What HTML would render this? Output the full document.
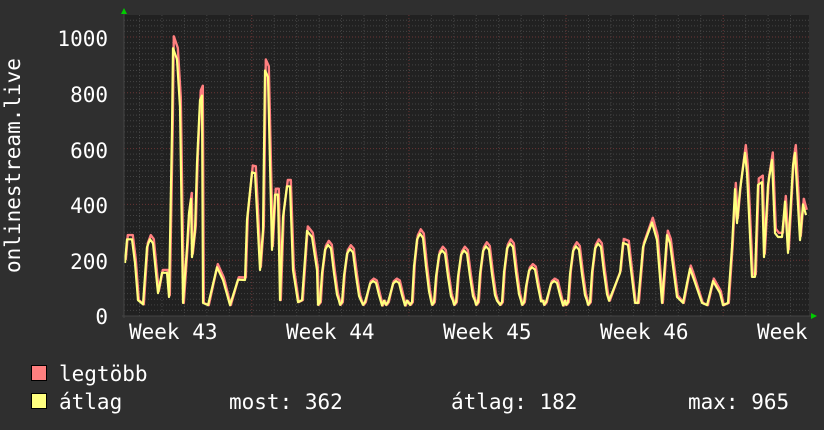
<!DOCTYPE html>
<html><head><meta charset="utf-8"><style>
html,body{margin:0;padding:0;background:#2f2f2f;width:824px;height:430px;overflow:hidden}
svg{display:block}
text{font-family:"DejaVu Sans Mono","Liberation Mono",monospace;fill:#fff;font-size:21px}
</style></head><body>
<svg id="g" width="824" height="430" xmlns="http://www.w3.org/2000/svg">
<rect x="0" y="0" width="824" height="430" fill="#2f2f2f"/>
<rect x="124" y="15" width="685" height="301" fill="#212121"/>
<g id="grid"></g>
<g id="lines"></g>
<line x1="122" y1="316" x2="812" y2="316" stroke="#444" stroke-width="1"/>
<line x1="124" y1="12" x2="124" y2="318" stroke="#444" stroke-width="1"/>
<polygon points="121,14 127,14 124,8" fill="#00cc00"/>
<polygon points="811,313 811,319 817,316" fill="#00cc00"/>
<text x="108" y="46" text-anchor="end">1000</text>
<text x="108" y="102" text-anchor="end">800</text>
<text x="108" y="158" text-anchor="end">600</text>
<text x="108" y="213" text-anchor="end">400</text>
<text x="108" y="269" text-anchor="end">200</text>
<text x="108" y="324" text-anchor="end">0</text>
<text x="129" y="339">Week 43</text>
<text x="286" y="339">Week 44</text>
<text x="443" y="339">Week 45</text>
<text x="600" y="339">Week 46</text>
<text x="757" y="339">Week</text>
<text transform="translate(20,273) rotate(-90)" x="0" y="0" font-size="21">onlinestream.live</text>
<rect x="31.5" y="365.5" width="15" height="15" fill="#ff7f7f" stroke="#000"/>
<rect x="31.5" y="393.5" width="15" height="15" fill="#ffff7f" stroke="#000"/>
<text x="59" y="381">legtöbb</text>
<text x="59" y="409">átlag</text>
<text x="229" y="409">most: 362</text>
<text x="451" y="409">átlag: 182</text>
<text x="688" y="409">max: 965</text>
</svg>
<script>
function Y(v){return 316-v*0.279;}
var grid=document.getElementById('grid'),h='';
for(var v=20;v<=1080;v+=20){var y=Y(v);if(y<15)break;
 h+='<line x1="124" x2="809" y1="'+y+'" y2="'+y+'" stroke="'+(v%200==0?'#6a3535':'#444')+'" stroke-width="1" stroke-dasharray="1,2"/>';}
for(var x=139.5;x<809;x+=22.45){var maj=[252,409,566,723].some(function(m){return Math.abs(m-x)<4});
 h+='<line y1="15" y2="316" x1="'+x+'" x2="'+x+'" stroke="'+(maj?'#6a3535':'#444')+'" stroke-width="1" stroke-dasharray="1,2"/>';}
grid.innerHTML=h;
var kp=[[125,190],[127,275],[132,275],[135,190],[138,57],[143,42],[147,247],[150,275],[153,261],[158,82],[162,155],[167,155],[169,68],[172,667],[173,960],[177,920],[180,749],[183,47],[187,247],[189,369],[191,420],[192,211],[195,308],[197,548],[200,774],[202,790],[203,47],[208,39],[217,175],[223,129],[230,39],[238,130],[245,129],[247,344],[252,515],[255,512],[260,165],[263,308],[265,880],[268,857],[272,237],[275,435],[278,435],[280,57],[283,355],[287,465],[290,465],[293,165],[298,50],[302,57],[307,305],[312,283],[317,165]];
var peaks=[[330,255],[352,240],[375,125],[398,125],[422,295],[444,235],[466,235],[488,250],[512,260],[534,175],[556,125],[578,250],[600,260]];
peaks.forEach(function(p){var c=p[0],pk=p[1];
 kp.push([c-12,40],[c-10,50],[c-8,pk*0.6],[c-5,pk*0.93],[c-2,pk],[c+1,pk*0.95],[c+4,pk*0.6],[c+7,pk*0.3],[c+9,55]);});
kp=kp.concat([[620,154],[623,262],[628,255],[635,47],[638,47],[643,247],[652,335],[657,272],[662,47],[667,290],[670,262],[677,68],[683,47],[690,170],[693,140],[702,47],[707,39],[713,125],[720,82],[723,39],[728,47],[732,247],[735,455],[737,333],[740,451],[745,585],[747,512],[752,140],[755,140],[758,470],[762,480],[764,211],[768,470],[772,560],[775,297],[778,283],[782,283],[785,410],[788,226],[793,540],[795,585],[800,272],[803,400],[806,362]]);
kp.sort(function(a,b){return a[0]-b[0]});
function path(f,dx){return kp.map(function(p,i){return (i?'L':'M')+(p[0]+dx)+','+Y(f(p[1])).toFixed(1)}).join('');}
document.getElementById('lines').innerHTML='<path d="'+path(function(v){return v<60?v:v*1.04+4},0.8)+'" fill="none" stroke="#ff7f7f" stroke-width="2.4" stroke-linejoin="round"/>'+
'<path d="'+path(function(v){return v},0)+'" fill="none" stroke="#ffff7f" stroke-width="2.2" stroke-linejoin="round"/>';
</script>
</body></html>
